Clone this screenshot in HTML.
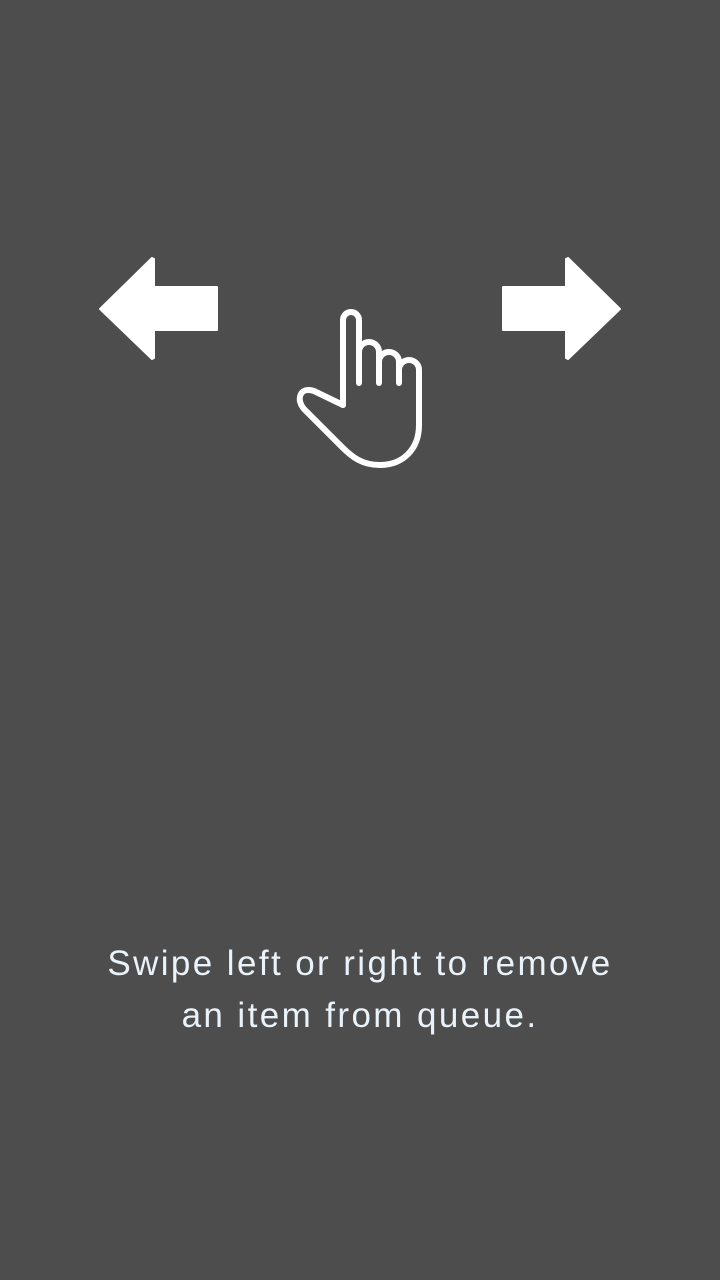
<!DOCTYPE html>
<html><head><style>
html,body{margin:0;padding:0;background:#4d4d4d;width:720px;height:1280px;overflow:hidden}
.t{position:absolute;left:0;width:720px;top:938px;text-align:center;color:#eaf2fa;font-family:"Liberation Sans",sans-serif;font-size:35px;line-height:52px;letter-spacing:2.4px}
svg{position:absolute;left:0;top:0}
</style></head><body>
<svg width="720" height="600" viewBox="0 0 720 600">
<path d="M100,309 L152,258 L154,259 L154,287 L217,287 L217,330 L154,330 L154,358 L152,359 Z" fill="#fff" stroke="#fff" stroke-width="2" stroke-linejoin="round"/>
<path d="M620,309 L568,258 L566,259 L566,287 L503,287 L503,330 L566,330 L566,358 L568,359 Z" fill="#fff" stroke="#fff" stroke-width="2" stroke-linejoin="round"/>
<g fill="none" stroke="#fff" stroke-width="6" stroke-linecap="round" stroke-linejoin="round">
<path d="M343,405 L343,320 A8,8 0 0 1 359,320 L359,383"/>
<path d="M359,352 A10,10 0 0 1 379,352 L379,383"/>
<path d="M379,362 A10,10 0 0 1 399,362 L399,383"/>
<path d="M399,370 A10,10 0 0 1 419,370 L419,425 C419,450 402,465 380,465 C362,465 352,457 342,447 L305,410 C295,400 300,386 314,391 L343,405"/>
</g>
</svg>
<div class="t">Swipe left or right to remove<br>an item from queue.</div>
</body></html>
